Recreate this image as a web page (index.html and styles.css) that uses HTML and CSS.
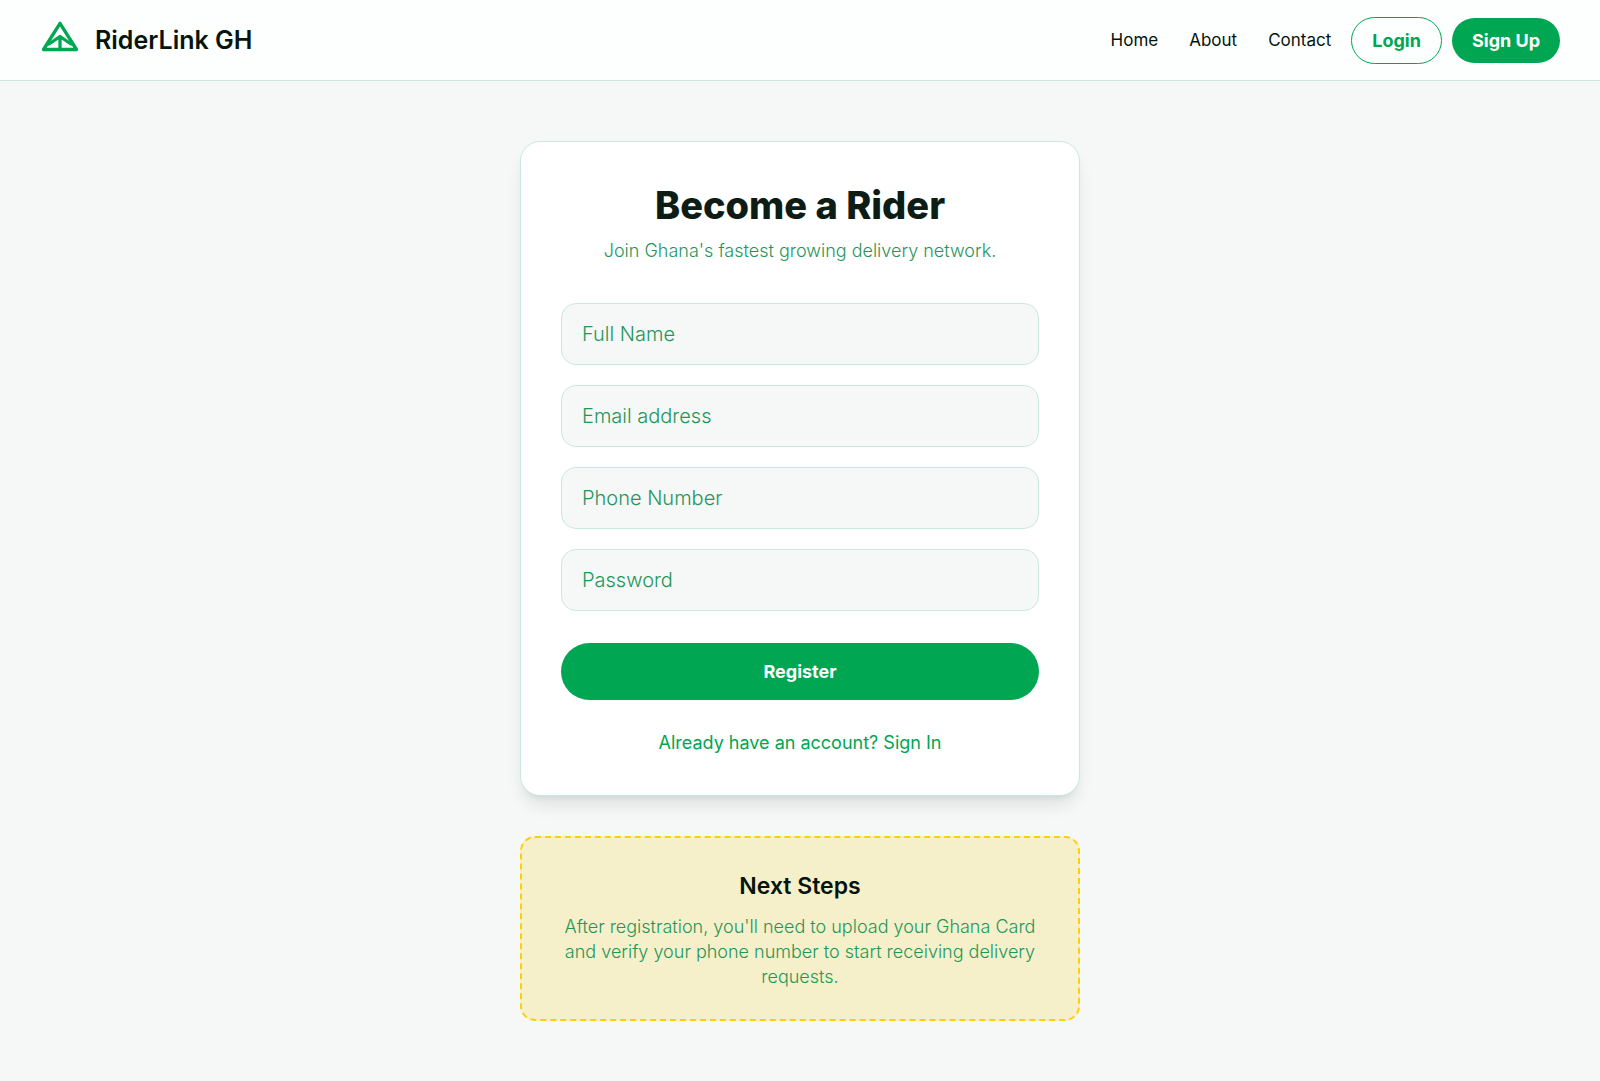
FILE: index.html
```html
<!DOCTYPE html>
<html lang="en">
<head>
  <meta charset="utf-8">
  <meta name="viewport" content="width=device-width, initial-scale=1">
  <title>RiderLink GH - Become a Rider</title>
  <link rel="stylesheet" href="styles.css">
</head>
<body>
  <header class="site-header">
    <a class="brand" href="#">
      <svg class="brand-icon" viewBox="0 0 40 40" fill="none" stroke="currentColor" stroke-width="3.300" stroke-linecap="round" stroke-linejoin="round" aria-hidden="true">
        <path d="M20 3.300 3.500 29.500h33z"/>
        <path d="M9 24 20 16.500 31 24M20 16.500v13"/>
      </svg>
      <span class="brand-name">RiderLink GH</span>
    </a>
    <div class="header-actions">
      <nav class="nav">
        <a href="#">Home</a>
        <a href="#">About</a>
        <a href="#">Contact</a>
      </nav>
      <div class="auth">
        <button class="pill pill-outline" type="button">Login</button>
        <button class="pill pill-solid" type="button">Sign Up</button>
      </div>
    </div>
  </header>
  <main class="main">
    <section class="card">
      <h1 class="title">Become a Rider</h1>
      <p class="subtitle">Join Ghana's fastest growing delivery network.</p>
      <form class="form">
        <input class="field" type="text" placeholder="Full Name" aria-label="Full Name">
        <input class="field" type="email" placeholder="Email address" aria-label="Email address">
        <input class="field" type="tel" placeholder="Phone Number" aria-label="Phone Number">
        <input class="field" type="password" placeholder="Password" aria-label="Password">
        <button class="submit" type="submit">Register</button>
      </form>
      <a class="signin" href="#">Already have an account? Sign In</a>
    </section>
    <section class="next">
      <h2 class="next-title">Next Steps</h2>
      <p class="next-text">After registration, you'll need to upload your Ghana Card and verify your phone number to start receiving delivery requests.</p>
    </section>
  </main>
</body>
</html>
```
FILE: styles.css
```css
:root {
  --green: #00a651;
  --muted: #1f965a;
  --ink: #05140d;
  --line: #c9e9da;
  --surface: #f6f8f8;
}

* {
  box-sizing: border-box;
}

body {
  margin: 0;
  background: var(--surface);
  color: var(--ink);
  font-family: Inter, "Liberation Sans", sans-serif;
  font-size: 18px;
  line-height: 25px;
}

h1, h2, p {
  margin: 0;
}

a {
  color: inherit;
  text-decoration: none;
}

button, input {
  font: inherit;
}

button {
  cursor: pointer;
}

.site-header {
  display: flex;
  align-items: center;
  justify-content: space-between;
  min-height: 81px;
  padding: 0 40px;
  background: #fdfefe;
  border-bottom: 1px solid var(--line);
}

.brand {
  display: flex;
  align-items: center;
  gap: 15px;
}

.brand-icon {
  width: 40px;
  height: 40px;
  color: var(--green);
}

.brand-name {
  font-size: 25px;
  font-weight: 600;
  line-height: 35px;
}

.header-actions {
  display: flex;
  align-items: center;
  gap: 20px;
}

.nav {
  display: flex;
  gap: 31px;
  font-size: 17px;
}

.auth {
  display: flex;
  align-items: center;
  gap: 10px;
}

.pill {
  padding: 10px 20px;
  border: 0;
  border-radius: 24px;
  font-weight: 700;
}

.pill-outline {
  background: transparent;
  border: 1px solid var(--green);
  color: var(--green);
}

.pill-solid {
  background: var(--green);
  color: #fff;
}

.main {
  display: flex;
  flex-direction: column;
  gap: 40px;
  max-width: 600px;
  margin: 0 auto;
  padding: 60px 20px;
}

.card {
  display: flex;
  flex-direction: column;
  padding: 40px;
  background: #fff;
  border: 1px solid var(--line);
  border-radius: 20px;
  box-shadow: 0 12px 18px -4px rgba(0, 0, 0, 0.1), 0 5px 7px -5px rgba(0, 0, 0, 0.1);
  text-align: center;
}

.title {
  font-size: 38px;
  font-weight: 800;
  line-height: 46px;
  color: #0d1c14;
}

.subtitle {
  margin-top: 10px;
  color: var(--muted);
  font-weight: 300;
}

.form {
  display: flex;
  flex-direction: column;
  gap: 20px;
  margin-top: 40px;
}

.field {
  width: 100%;
  height: 62px;
  padding: 0 20px;
  background: var(--surface);
  border: 1px solid var(--line);
  border-radius: 15px;
  color: var(--ink);
  font-size: 20px;
}

.field::placeholder {
  color: var(--muted);
  font-weight: 300;
  opacity: 1;
}

.submit {
  margin-top: 12px;
  padding: 16px 20px;
  background: var(--green);
  border: 0;
  border-radius: 29px;
  color: #fff;
  font-weight: 700;
}

.signin {
  align-self: center;
  margin-top: 30px;
  color: var(--green);
}

.next {
  padding: 30px 40px;
  background: #f5f0c9;
  border: 2px dashed #fccf0c;
  border-radius: 15px;
  text-align: center;
}

.next-title {
  font-size: 23px;
  font-weight: 600;
  line-height: 36px;
}

.next-text {
  margin-top: 10px;
  color: var(--muted);
  font-weight: 300;
}
```
